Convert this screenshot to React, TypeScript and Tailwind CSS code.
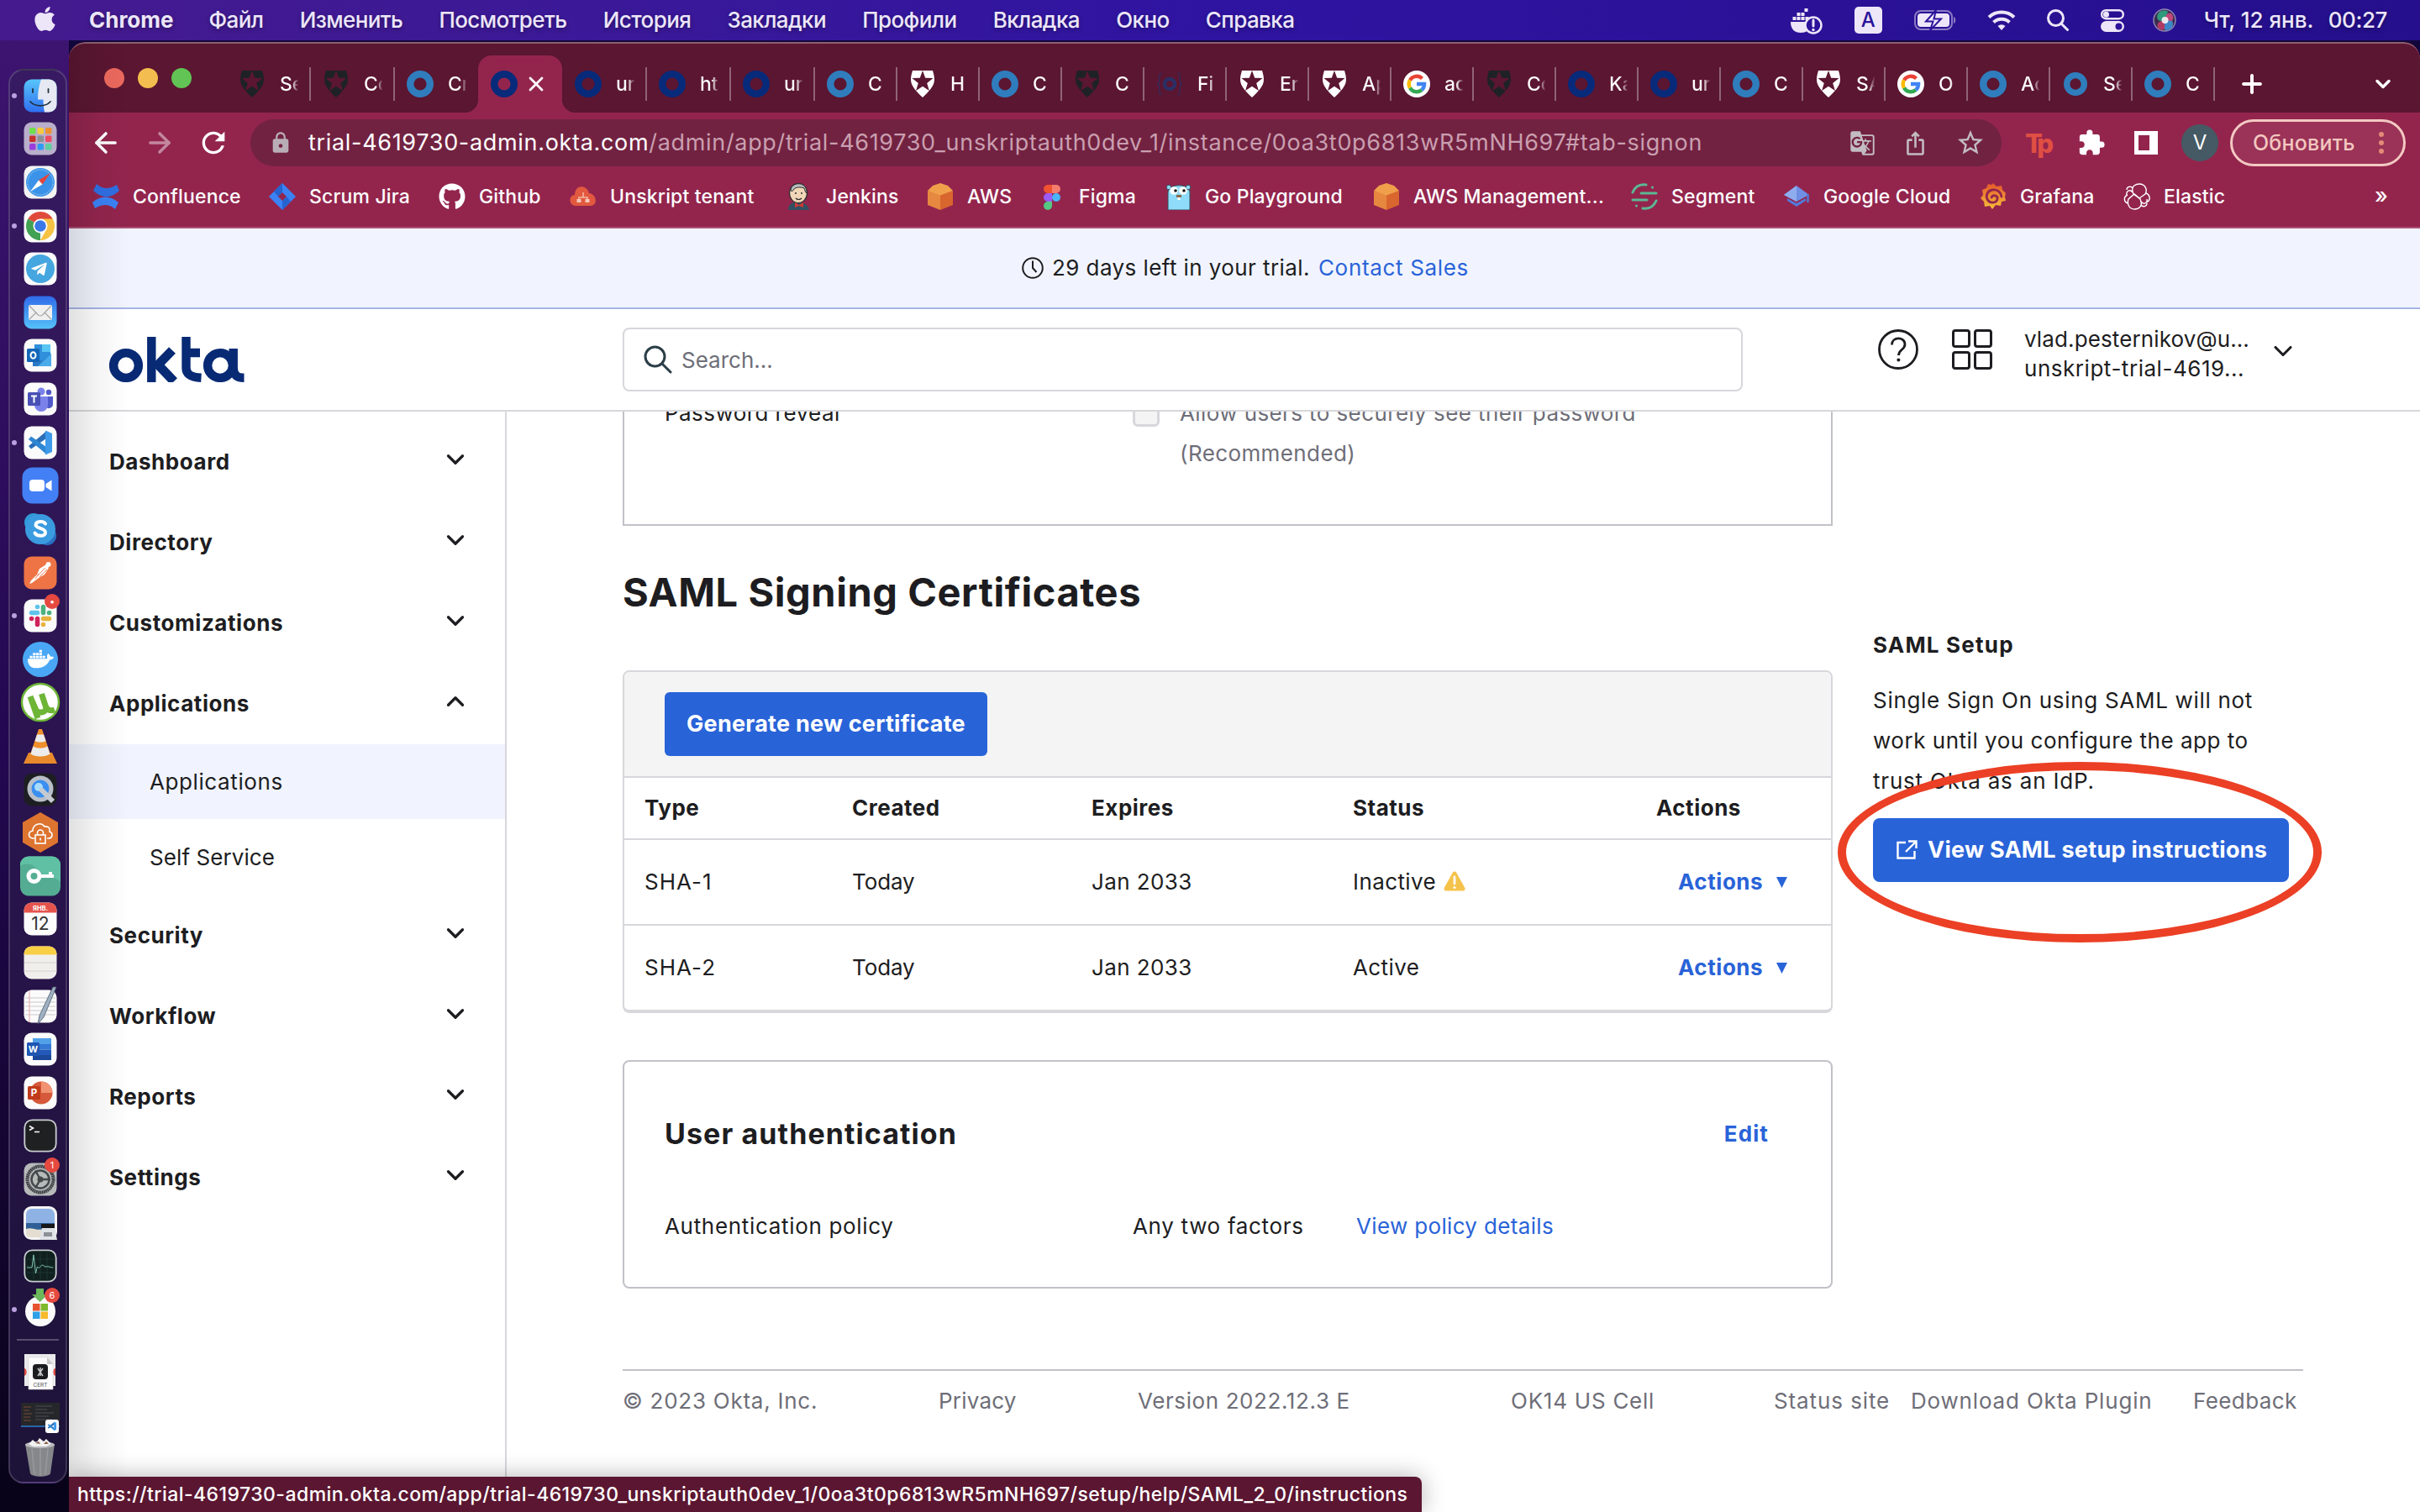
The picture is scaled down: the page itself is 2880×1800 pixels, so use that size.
import type { ReactNode } from "react";
import { ChevronDown, ChevronUp, ArrowLeft, ArrowRight, Plus, X } from "lucide-react";
import { FaApple, FaDocker, FaGithub, FaTelegramPlane } from "react-icons/fa";
import { MdExtension, MdGTranslate, MdIosShare, MdLock, MdRefresh, MdStarBorder } from "react-icons/md";

/* ---------- Shared marks ---------- */

function OktaRing({ className }: { className: string }) {
  return (
    <svg viewBox="0 0 32 32" className={className}>
      <circle cx="16" cy="16" r="11.8" fill="none" stroke="currentColor" strokeWidth="8.4" />
    </svg>
  );
}

function Shield({ className }: { className: string }) {
  return (
    <svg viewBox="0 0 32 32" className={className}>
      <path d="M4 0h24c1.500 5 2.400 8.500 1.800 13-.8 6-6.500 12-13.800 19C8.700 25 3 19 2.200 13 1.600 8.500 2.500 5 4 0z" fill="currentColor" />
      <path d="M16 0l3.200 8.800 9.300.2-7.300 5.900 2.700 9L16 18.700 8.100 23.900l2.700-9L3.500 9l9.300-.2z" fill="#5b1631" />
    </svg>
  );
}

function GoogleG() {
  return (
    <svg viewBox="0 0 32 32" className="size-8">
      <circle cx="16" cy="16" r="16" fill="#fff" />
      <g fill="none" strokeWidth="4.400">
        <path d="M22.500 9.500A9.200 9.200 0 0 0 8 11.400" stroke="#ea4335" />
        <path d="M8 11.400a9.200 9.200 0 0 0 0 9.200" stroke="#fbbc05" />
        <path d="M8 20.600a9.200 9.200 0 0 0 14 2.400" stroke="#34a853" />
        <path d="M22 23a9.200 9.200 0 0 0 3.100-7H16" stroke="#4285f4" />
      </g>
    </svg>
  );
}

function BraceRing() {
  return (
    <svg viewBox="0 0 32 32" className="size-8 text-[#2b2f66]">
      <circle cx="16" cy="16" r="6" fill="none" stroke="currentColor" strokeWidth="4.500" />
      <path d="M7 3c-4 0-3 3-3 7 0 3-1 5-2 6 1 1 2 3 2 6 0 4-1 7 3 7M25 3c4 0 3 3 3 7 0 3 1 5 2 6-1 1-2 3-2 6 0 4 1 7-3 7" fill="none" stroke="currentColor" strokeWidth="1.200" />
    </svg>
  );
}

/* ---------- macOS menu bar ---------- */

const menus = ["Файл", "Изменить", "Посмотреть", "История", "Закладки", "Профили", "Вкладка", "Окно", "Справка"];

function MenuBar() {
  return (
    <header className="flex h-12 items-center justify-between bg-linear-to-r from-[#451a8e] via-[#2f14a2] to-[#250f8c] pr-[39px] pl-[37px] text-[26px] leading-none font-medium text-[#ece6f8] [text-shadow:0_2px_5px_rgba(0,0,0,0.35)]">
      <div className="flex items-center">
        <FaApple className="mb-1 size-[33px]" />
        <span className="ml-9 font-bold">Chrome</span>
        <nav className="ml-[42px] flex gap-[43.3px] tracking-[-0.600px]">
          {menus.map((m) => (
            <span key={m}>{m}</span>
          ))}
        </nav>
      </div>
      <div className="flex items-center">
        <svg viewBox="0 0 38 32" className="mt-1 h-8 w-[38px]" fill="currentColor">
          <path d="M0 16h20v10.500c-2 1.800-5 2.500-8 2.500C5 29 0 25 0 16zM2.500 10h4v4h-4zM7.500 10h4v4h-4zM12.500 10h4v4h-4zM7.500 5h4v4h-4zM12.500 5h4v4h-4zM17.500 10h4v4h-4zM16.500 0h4v4h-4z" />
          <circle cx="27" cy="20" r="9.500" fill="#2a129a" stroke="currentColor" strokeWidth="2.500" />
          <path d="M27 14v7" stroke="currentColor" strokeWidth="3" strokeLinecap="round" />
          <circle cx="27" cy="25.500" r="1.700" />
        </svg>
        <span className="ml-[38px] flex h-8 w-[33px] items-center justify-center rounded-[5px] bg-[#ece6f8] text-[24px] text-[#2a129a] [text-shadow:none]">A</span>
        <svg viewBox="0 0 50 24" className="ml-[38px] h-6 w-[50px]">
          <rect x="1" y="1" width="44" height="22" rx="7" fill="none" stroke="#ece6f8" strokeOpacity="0.5" strokeWidth="2" />
          <rect x="4" y="4" width="38" height="16" rx="4" fill="#ece6f8" />
          <path d="M47 8c3 1 3 7 0 8z" fill="#ece6f8" fillOpacity="0.5" />
          <path d="M26 0L14 13.500h8.500L19 24l13-13.500h-8.500z" fill="#ece6f8" stroke="#2a129c" strokeWidth="2" />
        </svg>
        <svg viewBox="0 0 34 26" className="ml-[37px] h-[26px] w-[34px]" fill="none" stroke="currentColor" strokeWidth="4">
          <path d="M2 9.500a22 22 0 0 1 30 0M7.500 15.500a14 14 0 0 1 19 0" />
          <path d="M12.500 20a7 7 0 0 1 9 0L17 25z" fill="currentColor" stroke="none" />
        </svg>
        <svg viewBox="0 0 26 26" className="ml-[37px] size-[26px]" fill="none" stroke="currentColor" strokeWidth="3" strokeLinecap="round">
          <circle cx="10.500" cy="10.500" r="9" />
          <path d="M17.500 17.500l7 7" />
        </svg>
        <svg viewBox="0 0 28 27" className="ml-[38px] h-[27px] w-7">
          <rect x="1.200" y="1.200" width="25.600" height="10" rx="5" fill="none" stroke="#ece6f8" strokeWidth="2.400" />
          <circle cx="6.500" cy="6.200" r="3.500" fill="#ece6f8" />
          <rect y="14" width="28" height="13" rx="6.500" fill="#ece6f8" />
          <circle cx="21.500" cy="20.500" r="4" fill="#2a129a" />
        </svg>
        <svg viewBox="0 0 28 28" className="ml-[34px] size-7">
          <circle cx="14" cy="14" r="13" fill="#3a2c50" stroke="#8f86b0" strokeWidth="1.500" />
          <path d="M14 14C6 18 2 10 8 4c4-2 9-2 10 0z" fill="#2f9a7c" />
          <path d="M14 14c8-4 12 2 9 9-3 3-8 4-9 2z" fill="#3f86c8" />
          <path d="M14 14c-7 1-10 4-8 9 3 4 8 3 8 1z" fill="#b03a64" />
          <path d="M14 14c1-7 4-10 8-8 3 3 3 8 0 9z" fill="#c0477a" />
          <circle cx="14.500" cy="14" r="4" fill="#fff" fillOpacity="0.85" />
        </svg>
        <span className="ml-[33px] w-[148px] whitespace-nowrap">Чт, 12 янв.</span>
        <span className="tracking-[-0.400px]">00:27</span>
      </div>
    </header>
  );
}

/* ---------- Dock ---------- */

function Art({ children }: { children: ReactNode }) {
  return (
    <svg viewBox="0 0 40 40" className="size-10 overflow-visible">
      {children}
    </svg>
  );
}

function Tile({ fill = "#fbfbfb" }: { fill?: string }) {
  return <rect x="0.500" y="0.500" width="39" height="39" rx="9" fill={fill} />;
}

type DockApp = { name: string; art: ReactNode; running?: boolean; badge?: string };

const vscode = (
  <>
    <path d="M27 6l-3 3L6 24l3 3.500L27 15z" fill="#2a6fb8" />
    <path d="M27 34l-3-3L6 16l3-3.500L27 25z" fill="#2f86d2" />
    <path d="M26 5.500l8 3.500v22l-8 3.500z" fill="#3f9bea" />
  </>
);

const dockApps: DockApp[] = [
  {
    name: "Finder",
    running: true,
    art: (
      <Art>
        <defs>
          <linearGradient id="finder" x2="0" y2="1">
            <stop stopColor="#58c5fb" />
            <stop offset="1" stopColor="#2f6ff0" />
          </linearGradient>
        </defs>
        <Tile fill="url(#finder)" />
        <path d="M21 .5h9.500a9 9 0 0 1 9 9v21a9 9 0 0 1-9 9H25c-1-5-1.500-9-1.500-15H17C17 15 18.500 7 21 .5z" fill="#e6e9f1" />
        <path d="M11 12v4M29.500 12v4M8 27c6 6.500 18 6.500 24 0" fill="none" stroke="#20303f" strokeWidth="1.800" strokeLinecap="round" />
      </Art>
    ),
  },
  {
    name: "Launchpad",
    art: (
      <Art>
        <Tile fill="#b9aecb" />
        {["#6fe04d", "#f7c93f", "#ee9133", "#c8322c", "#8e8e93", "#ee4b62", "#9a3fdc", "#2f9cf4", "#5fcfa0"].map((c, i) => (
          <rect key={c} x={7 + (i % 3) * 9.5} y={7 + Math.floor(i / 3) * 9.5} width="7.500" height="7.500" rx="1.500" fill={c} />
        ))}
      </Art>
    ),
  },
  {
    name: "Safari",
    art: (
      <Art>
        <Tile fill="#f3f3f3" />
        <circle cx="20" cy="20" r="17" fill="#3a93e8" />
        <circle cx="20" cy="20" r="15" fill="none" stroke="#bcdcf8" strokeWidth="1.500" strokeDasharray="0.600 1.400" />
        <path d="M32 9L18 17.500l4.500 5z" fill="#e8433a" />
        <path d="M8 31l10-13.500 4.500 5z" fill="#fff" />
      </Art>
    ),
  },
  {
    name: "Chrome",
    running: true,
    art: (
      <Art>
        <Tile />
        <path d="M20 20L5.300 11.500A17 17 0 0 1 34.700 11.500z" fill="#e04a3c" />
        <path d="M20 20V37A17 17 0 0 1 5.300 11.500z" fill="#43a154" />
        <path d="M20 11.500h14.700A17 17 0 0 1 20 37l7.500-13z" fill="#f6c244" />
        <circle cx="20" cy="20" r="8.500" fill="#fff" />
        <circle cx="20" cy="20" r="6.800" fill="#3b78e7" />
      </Art>
    ),
  },
  {
    name: "Telegram",
    art: (
      <Art>
        <Tile />
        <circle cx="20" cy="20" r="17" fill="#46a6e0" />
        <FaTelegramPlane x="8" y="10" size={21} color="#fff" />
      </Art>
    ),
  },
  {
    name: "Mail",
    art: (
      <Art>
        <defs>
          <linearGradient id="mail" x2="0" y2="1">
            <stop stopColor="#2f6bea" />
            <stop offset="1" stopColor="#56c1fa" />
          </linearGradient>
        </defs>
        <Tile fill="url(#mail)" />
        <rect x="6" y="11" width="28" height="18" rx="2" fill="#f0f0f0" />
        <path d="M7 12l10.500 11q2.500 2 5 0L33 12M7 28l8-8M33 28l-8-8" fill="none" stroke="#a5a5a5" strokeWidth="1.200" />
      </Art>
    ),
  },
  {
    name: "Outlook",
    art: (
      <Art>
        <Tile />
        <path d="M13 7h19v26H13z" fill="#2f8fdc" />
        <path d="M22 7h10v9H22z" fill="#59c5f2" />
        <path d="M11 19l11 8 11-9v15H11z" fill="#2a78c6" />
        <path d="M33 18v15H17z" fill="#4aabeb" />
        <rect x="4" y="12" width="15" height="16" rx="1.500" fill="#1567b8" />
        <ellipse cx="11.500" cy="20" rx="3" ry="3.700" fill="none" stroke="#fff" strokeWidth="2" />
      </Art>
    ),
  },
  {
    name: "Teams",
    art: (
      <Art>
        <Tile />
        <circle cx="21" cy="11" r="4.500" fill="#7b83eb" />
        <circle cx="30" cy="12" r="3.200" fill="#5059c9" />
        <path d="M24 17h11v9a5 5 0 0 1-9 3z" fill="#5059c9" />
        <path d="M13 17h16v10a8 8 0 0 1-16 0z" fill="#7b83eb" />
        <rect x="5" y="12" width="15" height="16" rx="1.500" fill="#4850b5" />
        <path d="M9 16.500h7M12.500 16.500v8" stroke="#fff" strokeWidth="2" />
      </Art>
    ),
  },
  { name: "VS Code", running: true, art: <Art><Tile />{vscode}</Art> },
  {
    name: "Zoom",
    art: (
      <Art>
        <rect x="-1.500" y="-1.500" width="43" height="43" rx="12" fill="#4380f5" />
        <rect x="7" y="13" width="18" height="14" rx="4" fill="#fff" />
        <path d="M26.500 18l7-4.500v13l-7-4.500z" fill="#fff" />
      </Art>
    ),
  },
  {
    name: "Skype",
    art: (
      <Art>
        <circle cx="12" cy="12" r="11" fill="#2f9ad8" />
        <circle cx="28" cy="28" r="11" fill="#2a70c4" />
        <circle cx="20" cy="20" r="18" fill="#3b9be0" />
        <path d="M26 13.500c-2-3.500-11-3.500-11.500 1.200-.4 5 11.500 3.500 11.500 9.300 0 5-10 5-12.500.5" fill="none" stroke="#fff" strokeWidth="4" strokeLinecap="round" />
      </Art>
    ),
  },
  {
    name: "Postman",
    art: (
      <Art>
        <Tile fill="#ee7445" />
        <path d="M7 33l2-4 7-7 3-7 8-5 3 4-5 8-7 4-8 6z" fill="#fff" />
        <circle cx="29.500" cy="10" r="3" fill="#fff" />
        <path d="M16 24l10-10M19 25l9-9M18 21l-4 6" stroke="#ee7445" strokeWidth="0.900" />
      </Art>
    ),
  },
  {
    name: "Slack",
    running: true,
    badge: "•",
    art: (
      <Art>
        <Tile />
        <g strokeWidth="5.500" strokeLinecap="round">
          <path d="M9.500 16.500h7" stroke="#5fc4ec" />
          <path d="M16.500 9.500v.1" stroke="#5fc4ec" />
          <path d="M23.500 9.500v7" stroke="#4cb280" />
          <path d="M30.500 16.500h.1" stroke="#4cb280" />
          <path d="M23.500 23.500h7" stroke="#e8b23c" />
          <path d="M23.500 30.500v.1" stroke="#e8b23c" />
          <path d="M16.500 23.500v7" stroke="#d0245a" />
          <path d="M9.500 23.500h.1" stroke="#d0245a" />
        </g>
      </Art>
    ),
  },
  {
    name: "Docker",
    art: (
      <Art>
        <circle cx="20" cy="20" r="21" fill="#4aa7f5" />
        <FaDocker x="5" y="4" size={31} color="#fff" />
      </Art>
    ),
  },
  {
    name: "uTorrent",
    art: (
      <Art>
        <circle cx="20" cy="20" r="22" fill="#fff" stroke="#6db536" strokeWidth="2.500" />
        <path d="M8 13l9 26M8.500 14.500l6 14c3 6 14 4 12-3L21.500 10M26 24c2 5 5 7 11 5" fill="none" stroke="#6db536" strokeWidth="7" />
      </Art>
    ),
  },
  {
    name: "VLC",
    art: (
      <Art>
        <path d="M6 28h28l6 13H0z" fill="#e88a2c" />
        <path d="M18 0h4l10 30c-5 4-19 4-24 0z" fill="#ef8f2d" />
        <path d="M16 6.500h8l2.500 7.500c-4 2-9 2-13 0zM11.500 20.500c5 3 12 3 17 0l3 9c-5 4-18 4-23 0z" fill="#ececec" />
      </Art>
    ),
  },
  {
    name: "QuickTime",
    art: (
      <Art>
        <Tile fill="#1c1e22" />
        <circle cx="20" cy="19" r="13" fill="#3a8ff0" stroke="#b9bfc8" strokeWidth="5" />
        <circle cx="18" cy="17" r="5" fill="#a9dcff" />
        <path d="M20 19l15 15" stroke="#c5cad1" strokeWidth="6" />
      </Art>
    ),
  },
  {
    name: "AWS VPN",
    art: (
      <Art>
        <path d="M20-4l21 12v24L20 44-1 32V8z" fill="#dd7430" />
        <path d="M13 27H11c-6-1-6-8 0-9 0-8 10-11 14-5 5-1 7 3 6 6 5 2 3 8-1 8h-2" fill="none" stroke="#fff" strokeWidth="1.600" />
        <rect x="14" y="23" width="12" height="10" fill="none" stroke="#fff" strokeWidth="1.600" />
        <path d="M16.500 23v-2.500a3.500 3.500 0 0 1 7 0V23M20 26.500v3" fill="none" stroke="#fff" strokeWidth="1.600" />
      </Art>
    ),
  },
  {
    name: "Keys",
    art: (
      <Art>
        <rect x="-4" y="-3.500" width="48" height="47" rx="10" fill="#54ad93" />
        <path d="M-4 8C6 2 14 8 18 14s16 4 26 13V6.500a10 10 0 0 0-10-10H6a10 10 0 0 0-10 10z" fill="#5fc0a4" />
        <circle cx="12.500" cy="20" r="6.500" fill="none" stroke="#fff" strokeWidth="5" />
        <path d="M19 20h17M32 20v-5" stroke="#fff" strokeWidth="4" />
      </Art>
    ),
  },
  {
    name: "Calendar",
    art: (
      <Art>
        <Tile />
        <path d="M.5 12.500v-3a9 9 0 0 1 9-9h21a9 9 0 0 1 9 9v3z" fill="#e5544c" />
        <text x="20" y="9.800" textAnchor="middle" fontSize="7.500" fontWeight="700" fill="#fff">ЯНВ.</text>
        <text x="20" y="33" textAnchor="middle" fontSize="21" fill="#333">12</text>
      </Art>
    ),
  },
  {
    name: "Notes",
    art: (
      <Art>
        <Tile fill="#f1efec" />
        <path d="M.5 10.500v-1a9 9 0 0 1 9-9h21a9 9 0 0 1 9 9v1z" fill="#f8cf45" />
        <path d="M1 20h38M1 30h38" stroke="#d4d2ce" />
      </Art>
    ),
  },
  {
    name: "TextEdit",
    art: (
      <Art>
        <Tile />
        <path d="M2 10h36M2 15h36M2 20h36M2 25h36M2 30h36" stroke="#c9c9cd" />
        <path d="M7 1v38" stroke="#e9a3a3" />
        <path d="M39-3l-4 0L19 31l-2 10 7-8z" fill="#9fb0c2" stroke="#4d5c6c" strokeWidth="0.800" />
      </Art>
    ),
  },
  {
    name: "Word",
    art: (
      <Art>
        <Tile />
        <path d="M11 7h22v7H11z" fill="#52a0e8" />
        <path d="M11 14h22v6.500H11z" fill="#3479d4" />
        <path d="M11 20.500h22V27H11z" fill="#2359b8" />
        <path d="M11 27h22v6H11z" fill="#1c489a" />
        <rect x="4" y="12" width="15" height="16" rx="1.500" fill="#1e56b2" />
        <text x="11.500" y="24.200" textAnchor="middle" fontSize="11" fontWeight="700" fill="#fff">W</text>
      </Art>
    ),
  },
  {
    name: "PowerPoint",
    art: (
      <Art>
        <Tile />
        <circle cx="21" cy="20" r="13.500" fill="#d5593a" />
        <path d="M21 20V6.500A13.500 13.500 0 0 1 34.500 20z" fill="#f19373" />
        <rect x="5" y="12" width="15" height="16" rx="1.500" fill="#c13b1b" />
        <text x="12.500" y="24.200" textAnchor="middle" fontSize="11.500" fontWeight="700" fill="#fff">P</text>
      </Art>
    ),
  },
  {
    name: "Terminal",
    art: (
      <Art>
        <rect x="1.300" y="1.300" width="37.400" height="37.400" rx="9" fill="#1f2022" stroke="#c9ced1" strokeWidth="1.800" />
        <path d="M7 8.500l4.500 2.500L7 13.500M13 15.500h6" fill="none" stroke="#fff" strokeWidth="1.500" />
      </Art>
    ),
  },
  {
    name: "Settings",
    badge: "1",
    art: (
      <Art>
        <Tile fill="#b6bab9" />
        <circle cx="20" cy="20" r="15.500" fill="none" stroke="#3c3f42" strokeWidth="4" strokeDasharray="1.800 0.500" />
        <circle cx="20" cy="20" r="10.500" fill="none" stroke="#45484b" strokeWidth="2.500" />
        <path d="M20 20h12M20 20l-6-10.500M20 20l-6 10.500" stroke="#45484b" strokeWidth="2.500" />
        <circle cx="20" cy="20" r="3.500" fill="#45484b" />
      </Art>
    ),
  },
  {
    name: "Preview",
    art: (
      <Art>
        <rect x="1.500" y="1.500" width="37" height="37" rx="8" fill="#8fb2e4" stroke="#f4f4f4" strokeWidth="3" />
        <path d="M3 20h34v9H3z" fill="#2f5f96" />
        <path d="M3 27c6-3 14 3 20 0v10H8c-3 0-5-2-5-5z" fill="#e4ded2" />
        <path d="M21 21h16v5H21z" fill="#17181a" />
        <path d="M22 26h15l3 14H19z" fill="#dfe2e6" />
        <path d="M24 31h10v5H24z" fill="#8c9097" />
      </Art>
    ),
  },
  {
    name: "Activity Monitor",
    art: (
      <Art>
        <rect x="1.300" y="1.300" width="37.400" height="37.400" rx="9" fill="#10201f" stroke="#c9ced1" strokeWidth="1.800" />
        <path d="M4 12h32M4 20h32M4 28h32M12 4v32M20 4v32M28 4v32" stroke="#234540" strokeWidth="0.600" />
        <path d="M4 22h6l2-15 2.500 22 1.800-8c3 4 4-2 6-2s3 3 5 2 3 1 8 1" fill="none" stroke="#7fc3b2" strokeWidth="1" />
      </Art>
    ),
  },
  {
    name: "Microsoft AutoUpdate",
    running: true,
    badge: "6",
    art: (
      <Art>
        <circle cx="20" cy="22" r="18" fill="#fafafa" />
        <path d="M15-5h9v7h5l-9.500 9L10 2h5z" fill="#6cb85c" />
        <path d="M11 13h8.500v8.500H11z" fill="#e5532f" />
        <path d="M20.500 13H29v8.500h-8.500z" fill="#7fba2c" />
        <path d="M11 22.500h8.500V31H11z" fill="#2fa0e8" />
        <path d="M20.500 22.500H29V31h-8.500z" fill="#f8b92c" />
      </Art>
    ),
  },
];

const dockFiles: DockApp[] = [
  {
    name: "Certificate",
    art: (
      <Art>
        <path d="M1 0h37v38H1z" fill="#e9e9ea" />
        <path d="M1 17c3 0 4 8 0 9zM38 17c-3 0-4 8 0 9z" fill="#dc4b41" />
        <path d="M6 4h22l7 8v30H6z" fill="#fbfbfb" stroke="#dcdcde" strokeWidth="0.600" />
        <path d="M28 4l7 8h-7z" fill="#c9c9cb" />
        <rect x="11" y="12" width="18" height="18" rx="4" fill="#1b1c1e" />
        <path d="M17 17l6 9M23 17l-6 9M20 16v10" stroke="#c8c8ca" strokeWidth="1.500" />
        <text x="20" y="38.500" textAnchor="middle" fontSize="6.500" fill="#555">CERT</text>
      </Art>
    ),
  },
  {
    name: "Editor window",
    art: (
      <Art>
        <rect x="-3" y="6" width="46" height="28" fill="#26272b" />
        <path d="M0 11h9M0 15h7M0 19h10M0 23h8M0 27h9" stroke="#7a4a34" />
        <path d="M14 10h20M14 14h14M14 18h22M14 22h16M14 26h20" stroke="#4c4e55" />
        <path d="M-3 34h46" stroke="#2f7ed0" strokeWidth="1.500" />
        <rect x="26" y="26" width="16" height="16" rx="3" fill="#fff" />
        <g transform="translate(26.500 26.500) scale(0.370)">{vscode}</g>
      </Art>
    ),
  },
  {
    name: "Trash",
    art: (
      <Art>
        <path d="M2 3h35l-5 35c-2 5-22 5-24 0z" fill="#85878b" />
        <path d="M10 8l3 31M20 8v33M29 8l-3 31" stroke="#989a9f" strokeWidth="1.500" />
        <ellipse cx="19.500" cy="4" rx="17.500" ry="4" fill="#b9babd" />
        <path d="M6 3l5-5 4 4 4-6 5 4 3-3 6 6-6 3H11z" fill="#f1f1f1" />
        <path d="M14 2l4-2 2 3zM24 3l3-3 3 3z" fill="#8a5b45" />
      </Art>
    ),
  },
];

function DockSlot({ app }: { app: DockApp }) {
  return (
    <li className="relative flex h-[51.620px] shrink-0 items-center gap-2 pl-0.5">
      <span className={app.running ? "size-1.5 rounded-full bg-[#b9a0e0]" : "size-1.5"} />
      {app.art}
      {app.badge && (
        <span className="absolute top-0 left-[41px] flex size-[18px] items-center justify-center rounded-full bg-[#e5493f] text-[11px] leading-none text-white">
          {app.badge}
        </span>
      )}
    </li>
  );
}

function Dock() {
  return (
    <aside className="w-[82px] shrink-0 bg-linear-to-b from-[#3d1470] via-[#22084f] via-50% to-[#080318] pt-[34px] pl-2.5">
      <ul className="flex h-[1684px] w-[70px] flex-col rounded-[18px] border-2 border-white/15 bg-linear-to-b from-[#371a62] via-[#2a144f] to-[#1d1338] pt-1">
        {dockApps.map((a) => (
          <DockSlot key={a.name} app={a} />
        ))}
        <li className="mt-[9px] mb-[11px] ml-2 h-0.5 w-[50px] shrink-0 bg-white/25" />
        {dockFiles.map((a) => (
          <DockSlot key={a.name} app={a} />
        ))}
      </ul>
    </aside>
  );
}

/* ---------- Browser chrome ---------- */

const light = <OktaRing className="size-8 text-[#2f7dbd]" />;
const navy = <OktaRing className="size-8 text-[#082a7a]" />;
const dark = <Shield className="size-8 text-[#1e2227]" />;
const white = <Shield className="size-8 text-white" />;

const leadingTabs = [
  { icon: dark, title: "Se" },
  { icon: dark, title: "Co" },
  { icon: light, title: "Cr", noLine: true },
];
const middleTabs = [
  { icon: navy, title: "ur" },
  { icon: navy, title: "ht" },
  { icon: navy, title: "ur" },
];
const trailingTabs = [
  { icon: light, title: "C" },
  { icon: white, title: "H" },
  { icon: light, title: "C" },
  { icon: dark, title: "C" },
  { icon: <BraceRing />, title: "Fi" },
  { icon: white, title: "Er" },
  { icon: white, title: "Ap" },
  { icon: <GoogleG />, title: "ac" },
  { icon: dark, title: "Co" },
  { icon: navy, title: "Ka" },
  { icon: navy, title: "ur" },
  { icon: light, title: "C" },
  { icon: white, title: "SA" },
  { icon: <GoogleG />, title: "O" },
  { icon: light, title: "Ac" },
  { icon: <OktaRing className="mx-0.5 size-7 text-[#2f7dbd]" />, title: "Se" },
  { icon: light, title: "C" },
];

function Tab({ icon, title, noLine, wide }: { icon: ReactNode; title: string; noLine?: boolean; wide?: boolean }) {
  return (
    <div className={wide ? "flex w-[100px] items-center pl-[15px]" : "flex w-[98px] items-center pl-[15px]"}>
      {icon}
      <span className="ml-[17px] w-[28px] bg-linear-to-r from-white from-50% to-transparent to-80% bg-clip-text text-[23px] font-medium whitespace-nowrap text-transparent">
        {title}
      </span>
      {!noLine && <span className="-mr-px ml-auto h-10 w-0.5 shrink-0 bg-[#8f6475]" />}
    </div>
  );
}

function TabStrip() {
  return (
    <div className="flex h-[84px] items-end rounded-t-[20px] border-t-2 border-[#8e6073] bg-[#5b1631]">
      <div className="mb-[29px] ml-[42px] flex w-[145px] gap-4">
        <span className="size-6 rounded-full bg-[#ec695e]" />
        <span className="size-6 rounded-full bg-[#f4bd4f]" />
        <span className="size-6 rounded-full bg-[#61c454]" />
      </div>
      <div className="flex h-[68px]">
        {leadingTabs.map((t, i) => (
          <Tab key={i} wide {...t} />
        ))}
        <div className="relative flex w-[100px] items-center rounded-t-2xl bg-[#93254d] pl-[15px]">
          <span className="absolute bottom-0 -left-4 size-4 bg-[radial-gradient(circle_at_0_0,transparent_16px,#93254d_16.500px)]" />
          <span className="absolute -right-4 bottom-0 size-4 bg-[radial-gradient(circle_at_100%_0,transparent_16px,#93254d_16.500px)]" />
          {navy}
          <X className="ml-2 size-7 text-white" strokeWidth={2.4} />
        </div>
        {middleTabs.map((t, i) => (
          <Tab key={i} wide {...t} />
        ))}
        {trailingTabs.map((t, i) => (
          <Tab key={i} {...t} />
        ))}
        <div className="flex items-center pl-7 text-white">
          <Plus className="size-[34px]" strokeWidth={2.8} />
          <ChevronDown className="ml-[125px] size-7" strokeWidth={3} />
        </div>
      </div>
    </div>
  );
}

function Toolbar() {
  return (
    <div className="flex h-[72px] items-center text-white">
      <div className="flex w-[216px] items-center pl-[25px]">
        <ArrowLeft className="size-[38px]" strokeWidth={2.2} />
        <ArrowRight className="ml-[26px] size-[38px] opacity-45" strokeWidth={2.2} />
        <MdRefresh className="ml-[25px] size-[40px]" />
      </div>
      <div className="flex h-14 w-[2084px] items-center rounded-full bg-[#722241] pl-[22px]">
        <MdLock className="size-7 text-[#b9aeb6]" />
        <span className="ml-[19px] w-[1778px] pt-px text-[27px] tracking-[0.680px] whitespace-nowrap text-[#c99fb0]">
          <span className="text-white">trial-4619730-admin.okta.com</span>
          /admin/app/trial-4619730_unskriptauth0dev_1/instance/0oa3t0p6813wR5mNH697#tab-signon
        </span>
        <div className="ml-[56px] flex items-center gap-[32px] text-[#c2bcc0]">
          <MdGTranslate className="size-[31px]" />
          <MdIosShare className="size-[31px]" />
          <MdStarBorder className="size-[36px]" />
        </div>
      </div>
      <span className="ml-7 w-[33px] text-[31px] leading-none font-extrabold tracking-[-5px] text-[#e04f43]">Tp</span>
      <MdExtension className="ml-[29px] size-[34px]" />
      <span className="ml-[34px] h-7 w-7 border-[5px] border-r-[10px] border-white" />
      <span className="ml-7 flex size-11 items-center justify-center rounded-full bg-[#455a64] text-[24px]">V</span>
      <div className="ml-3.5 flex h-14 w-[209px] items-center rounded-full border-[3px] border-[#f3c9c3] bg-[#9a3357] pl-6 text-[25px] font-medium text-[#f3c6c0]">
        <span className="w-[150px] pt-0.5 tracking-[0.200px]">Обновить</span>
        <span className="flex flex-col gap-1">
          <span className="size-1.5 rounded-full bg-[#e58a78]" />
          <span className="size-1.5 rounded-full bg-[#e58a78]" />
          <span className="size-1.5 rounded-full bg-[#e58a78]" />
        </span>
      </div>
    </div>
  );
}

const awsCube = (
  <svg viewBox="0 0 32 32" className="size-8">
    <path d="M1 9l15 4v19L1 26z" fill="#e6883f" />
    <path d="M31 9l-15 4v19l15-6z" fill="#d9662f" />
    <path d="M16 0l9 3 6 6-15 5.500L1 9l6-6z" fill="#f0a04b" />
  </svg>
);

const bookmarks: { label: string; box: string; icon: ReactNode }[] = [
  {
    label: "Confluence",
    box: "w-[210px]",
    icon: (
      <svg viewBox="0 0 32 32" className="size-8">
        <path d="M5 1c7 6 14 7 24 1l3 7C23 18 12 19 1 9z" fill="#2f6fe4" />
        <path d="M27 31c-7-6-14-7-24-1l-3-7c9-8 20-9 31 0z" fill="#3b82f6" />
      </svg>
    ),
  },
  {
    label: "Scrum Jira",
    box: "w-[202px]",
    icon: (
      <svg viewBox="0 0 32 32" className="size-8">
        <path d="M16 0l16 16-16 16L0 16z" fill="#3b82f6" />
        <path d="M16 0v11l-5 5-5-6z" fill="#2563d0" />
        <path d="M16 32V21l5-5 5 6z" fill="#2563d0" />
        <path d="M16 11l5 5-5 5-5-5z" fill="#93254d" />
      </svg>
    ),
  },
  { label: "Github", box: "w-[156px]", icon: <FaGithub className="size-8 text-white" /> },
  {
    label: "Unskript tenant",
    box: "w-[257px]",
    icon: (
      <svg viewBox="0 0 32 32" className="size-8">
        <path d="M7 27C-2 26-1 14 6 14 6 2 20 1 23 12c9 1 11 14 2 15z" fill="#e2593f" />
        <path d="M16 11v6M11 20v-3h10v3" fill="none" stroke="#f6b8a6" strokeWidth="1.500" />
        <path d="M8.500 19h5v4h-5zM18.500 19h5v4h-5z" fill="#f6c8ba" />
      </svg>
    ),
  },
  {
    label: "Jenkins",
    box: "w-[168px]",
    icon: (
      <svg viewBox="0 0 32 32" className="size-8">
        <path d="M3 32c0-6 4-9 11-10 8 1 13 4 14 10z" fill="#335061" />
        <ellipse cx="15" cy="12" rx="10.500" ry="11.500" fill="#f0d6b7" stroke="#2b2b2b" strokeWidth="1.200" />
        <path d="M6 9c0-11 20-12 19 3-2-1-2-4-3-6-5-2-10-1-12 1-1 2-2 3-4 2z" fill="#b9bcbe" stroke="#2b2b2b" />
        <path d="M11 12h2M18 12h2M12 18c2 2 5 2 7 0" stroke="#2b2b2b" strokeWidth="1.500" fill="none" />
        <path d="M11 23l5 3 5-3v6l-5-2-5 2z" fill="#d33833" />
      </svg>
    ),
  },
  { label: "AWS", box: "w-[133px]", icon: awsCube },
  {
    label: "Figma",
    box: "w-[150px]",
    icon: (
      <svg viewBox="0 0 32 32" className="size-8">
        <path d="M16 2h-5a5 5 0 0 0 0 10h5z" fill="#f0532f" />
        <path d="M16 2h5a5 5 0 0 1 0 10h-5z" fill="#f47c6c" />
        <path d="M16 12h-5a5 5 0 0 0 0 10h5z" fill="#9b5cf6" />
        <circle cx="21" cy="17" r="5" fill="#4bb4f8" />
        <path d="M16 22h-5a5 5 0 1 0 5 5z" fill="#55c883" />
      </svg>
    ),
  },
  {
    label: "Go Playground",
    box: "w-[248px]",
    icon: (
      <svg viewBox="0 0 32 32" className="size-8">
        <path d="M4 32V11C4 0 30 0 30 11v21z" fill="#8edcf9" stroke="#31505a" strokeWidth="1" />
        <circle cx="5" cy="5" r="2.800" fill="#8edcf9" stroke="#31505a" />
        <circle cx="28" cy="5" r="2.800" fill="#8edcf9" stroke="#31505a" />
        <circle cx="11" cy="9" r="4.800" fill="#fff" />
        <circle cx="22" cy="9" r="4.800" fill="#fff" />
        <circle cx="13" cy="9" r="1.800" fill="#111" />
        <circle cx="23" cy="9" r="1.800" fill="#111" />
        <path d="M14 14h6v3h-6z" fill="#8a6a4b" />
        <path d="M15.500 17h3v3h-3z" fill="#fff" />
      </svg>
    ),
  },
  { label: "AWS Management...", box: "w-[307px]", icon: awsCube },
  {
    label: "Segment",
    box: "w-[181px]",
    icon: (
      <svg viewBox="0 0 32 32" className="size-8" fill="none" stroke="#5cb894" strokeWidth="3" strokeLinecap="round">
        <path d="M2 11C5 4 11 1 18 2M30 21c-3 7-9 10-16 9M12 12h18M2 20h17" />
        <path d="M25.500 5v.1M6.500 27v.1" />
      </svg>
    ),
  },
  {
    label: "Google Cloud",
    box: "w-[234px]",
    icon: (
      <svg viewBox="0 0 32 32" className="size-8">
        <path d="M16 3l15 11-15 8L1 14z" fill="#6f8fe4" />
        <path d="M16 3L1 14l15 8z" fill="#8facee" />
        <path d="M5 18l11 6 11-6v3l-11 7-11-7z" fill="#5578d8" />
        <path d="M29.500 13v10" stroke="#5578d8" strokeWidth="2.500" />
      </svg>
    ),
  },
  {
    label: "Grafana",
    box: "w-[171px]",
    icon: (
      <svg viewBox="0 0 32 32" className="size-8">
        <defs>
          <linearGradient id="grafana" x2="0" y2="1">
            <stop stopColor="#e5562b" />
            <stop offset="1" stopColor="#f7c13a" />
          </linearGradient>
        </defs>
        <path d="M16 0l4 4 6-1 1 5 4 4-1 4 1 5-5 1-1 5-6-1-4 5-3-4-6 1-1-6-4-4 3-4-1-6 5-2 2-5 4 1z" fill="url(#grafana)" />
        <path d="M26 16c-1-6-6-9-11-8-6 1-8 7-6 11 3 6 11 5 12 0 1-4-5-6-7-2" fill="none" stroke="#93254d" strokeWidth="2.800" strokeLinecap="round" />
      </svg>
    ),
  },
  {
    label: "Elastic",
    box: "w-[150px]",
    icon: (
      <svg viewBox="0 0 32 32" className="size-8" fill="none" stroke="#fff" strokeWidth="1.400">
        <path d="M12 13C8 4 14 1 19 1c7 0 10 7 7 12l-7 5z" />
        <path d="M20 19c4 9-2 12-7 12-6 0-9-6-7-12l7-6z" />
        <path d="M11 11c-3-4-8-2-7 3M27 12c5 2 6 9 0 11M5 14c-5 2-5 9 1 10M21 22c3 4 8 2 7-3M4 8c0-4 5-5 7-2M28 24c0 4-5 5-7 2" />
      </svg>
    ),
  },
];

function Bookmarks() {
  return (
    <div className="flex h-[66px] items-center border-b-2 border-[#ab5274] pb-2 pl-7 text-[23px] font-medium tracking-[0.170px] text-white">
      {bookmarks.map((b) => (
        <div key={b.label} className={`flex shrink-0 items-center gap-4 whitespace-nowrap ${b.box}`}>
          {b.icon}
          {b.label}
        </div>
      ))}
      <span className="ml-[149px] pb-1 text-[26px]">»</span>
    </div>
  );
}

/* ---------- Okta admin page ---------- */

function TrialBanner() {
  return (
    <div className="flex h-24 items-center justify-center border-b-2 border-[#a5b4e8] bg-[#f1f4fe] pb-px pl-0.5">
      <svg viewBox="0 0 26 26" className="size-[26px]" fill="none" stroke="#1d1d21" strokeWidth="2">
        <circle cx="13" cy="13" r="11.800" />
        <path d="M13 4.500V13l4.500 5" />
      </svg>
      <span className="ml-2.5 tracking-[0.420px]">29 days left in your trial.</span>
      <a className="ml-2.5 tracking-[0.670px] text-[#2963d8]">Contact Sales</a>
    </div>
  );
}

function OktaLogo() {
  return (
    <svg viewBox="0 0 161 54" className="h-[54px] w-[161px] text-[#082a75]" fill="none" stroke="currentColor" strokeWidth="10.400">
      <circle cx="20" cy="34" r="14.900" />
      <path d="M50.300 0v54" />
      <path d="M55 36.500L75 16M56 31l21 22" strokeWidth="11" />
      <path d="M91.500 0v37c0 7.500 5 11 18 11.800M91.500 19H108" />
      <circle cx="132" cy="34" r="14.900" />
      <path d="M147.700 14v22c0 8 3 12.800 12.800 12.800" />
    </svg>
  );
}

function PageHeader() {
  return (
    <div className="flex h-[122px] items-center border-b-2 border-[#d7d7dc] pl-12">
      <OktaLogo />
      <div className="ml-[450px] flex h-[76px] w-[1333px] items-center rounded-lg border-2 border-[#d7d7dc] pl-[23px] text-[#6e6e78]">
        <svg viewBox="0 0 34 34" className="size-[34px]" fill="none" stroke="#2c3e48" strokeWidth="3" strokeLinecap="round">
          <circle cx="13.500" cy="13.500" r="11.500" />
          <path d="M22 22l10 10" />
        </svg>
        <span className="ml-[11px]">Search...</span>
      </div>
      <svg viewBox="0 0 48 48" className="mb-6 ml-[161px] size-12" fill="none" stroke="#1d1d21" strokeWidth="2.800">
        <circle cx="24" cy="24" r="22.500" />
        <path d="M16.500 18.500c0-10 15.500-10 15.500-.5 0 6.500-7.500 6-7.500 13" />
        <circle cx="24.400" cy="36.500" r="2" fill="#1d1d21" stroke="none" />
      </svg>
      <div className="mb-6 ml-10 grid size-12 grid-cols-2 gap-1">
        <span className="rounded-[4px] border-[3px] border-[#1d1d21]" />
        <span className="rounded-[4px] border-[3px] border-[#1d1d21]" />
        <span className="rounded-[4px] border-[3px] border-[#1d1d21]" />
        <span className="rounded-[4px] border-[3px] border-[#1d1d21]" />
      </div>
      <div className="mb-[15px] ml-[38px] w-[270px] leading-[35px] whitespace-nowrap">
        <div className="tracking-[0.120px]">vlad.pesternikov@u...</div>
        <div className="tracking-[0.530px]">unskript-trial-4619...</div>
      </div>
      <ChevronDown className="mb-5 ml-5 size-9" strokeWidth={2.1} />
    </div>
  );
}

function NavItem({ label, open }: { label: string; open?: boolean }) {
  const Chevron = open ? ChevronUp : ChevronDown;
  return (
    <div className="flex h-24 items-center justify-between pr-[42px] pl-12 font-bold tracking-[0.560px]">
      {label}
      <Chevron className="mb-1 size-[34px]" strokeWidth={2.3} />
    </div>
  );
}

function SideNav() {
  return (
    <nav className="w-[521px] shrink-0 border-r-2 border-[#d7d7dc] pt-[11px]">
      <NavItem label="Dashboard" />
      <NavItem label="Directory" />
      <NavItem label="Customizations" />
      <NavItem label="Applications" open />
      <div className="mt-px flex h-[89px] items-center bg-[#f1f4fe] pl-24 tracking-[0.600px]">Applications</div>
      <div className="flex h-[90px] items-center pl-24 tracking-[0.080px]">Self Service</div>
      <NavItem label="Security" />
      <NavItem label="Workflow" />
      <NavItem label="Reports" />
      <NavItem label="Settings" />
    </nav>
  );
}

const certificates = [
  { type: "SHA-1", created: "Today", expires: "Jan 2033", status: "Inactive", warn: true },
  { type: "SHA-2", created: "Today", expires: "Jan 2033", status: "Active", warn: false },
];

const columns = "grid grid-cols-[247px_285px_311px_361px_1fr] items-center pl-6";

function CertificateTable() {
  return (
    <div className="mt-[63px] rounded-lg border-2 border-b-4 border-[#d7d7dc]">
      <div className="flex h-[124px] items-center rounded-t-md bg-[#f4f4f4] pl-12">
        <button className="h-[76px] w-96 rounded-md bg-[#2963d8] text-[27px] font-bold tracking-[0.240px] text-white">Generate new certificate</button>
      </div>
      <div className={`${columns} h-[76px] border-y-2 border-[#d7d7dc] pb-0.5 font-bold tracking-[0.500px]`}>
        <span>Type</span>
        <span>Created</span>
        <span>Expires</span>
        <span>Status</span>
        <span>Actions</span>
      </div>
      {certificates.map((c) => (
        <div key={c.type} className={`${columns} h-[102px] border-b-2 border-[#d7d7dc] pb-0.5 tracking-[0.400px] last:h-[100px] last:border-b-0`}>
          <span className="tracking-[1px]">{c.type}</span>
          <span className="tracking-[-0.100px]">{c.created}</span>
          <span>{c.expires}</span>
          <span className="flex items-center">
            {c.status}
            {c.warn && (
              <svg viewBox="0 0 26 24" className="ml-[9px] h-6 w-[26px]">
                <path d="M13 3l10 18H3z" fill="#f5c34b" stroke="#f5c34b" strokeWidth="5" strokeLinejoin="round" />
                <path d="M13 7v8" stroke="#fff" strokeWidth="2.800" strokeLinecap="round" />
                <circle cx="13" cy="19.500" r="1.600" fill="#fff" />
              </svg>
            )}
          </span>
          <span className="flex items-center pl-[26px] font-bold tracking-[0.550px] text-[#2963d8]">
            Actions
            <svg viewBox="0 0 13 13" className="mt-0.5 ml-4 size-[13px]">
              <path d="M0 0h13L6.500 13z" fill="currentColor" />
            </svg>
          </span>
        </div>
      ))}
    </div>
  );
}

function SamlSetup() {
  return (
    <aside className="ml-12 w-[496px] pt-[254px] leading-[48px]">
      <h4 className="font-bold tracking-[1.200px]">SAML Setup</h4>
      <p className="mt-[18px] tracking-[0.800px] whitespace-nowrap">
        <span className="tracking-[0.700px]">Single Sign On using SAML will not</span>
        <br />
        <span className="tracking-[0.520px]">work until you configure the app to</span>
        <br />
        trust Okta as an IdP.
      </p>
      <button className="mt-5 flex h-[76px] w-[495px] items-center rounded-lg bg-[#2963d8] pl-[27px] text-[27px] font-bold tracking-[0.270px] whitespace-nowrap text-white">
        <svg viewBox="0 0 26 24" className="mr-3 h-6 w-[26px]" fill="none" stroke="#fff" strokeWidth="2.400">
          <path d="M12 3H2.500v18.500h20V13M15 1.500h9.500V10M24 2L12 14" />
        </svg>
        View SAML setup instructions
      </button>
    </aside>
  );
}

function Content() {
  return (
    <main className="flex-1 overflow-hidden pl-[138px]">
      <div className="flex">
        <div className="w-[1440px]">
          <div className="h-[136px] overflow-hidden border-x-2 border-b-2 border-[#c1c1c8]">
            <div className="-mt-[22px] flex pl-12 leading-[48px] text-[#6e6e78]">
              <span className="w-[557px] tracking-[0.440px] text-[#1d1d21]">Password reveal</span>
              <span className="mt-2 mr-6 size-8 rounded-md border-[3px] border-[#d7d7dc] bg-[#f4f4f4]" />
              <span className="tracking-[0.400px]">
                Allow users to securely see their password
                <br />
                (Recommended)
              </span>
            </div>
          </div>
          <h2 className="mt-[49px] text-[47px] leading-[60px] font-bold tracking-[0.560px]">SAML Signing Certificates</h2>
          <CertificateTable />
          <section className="mt-14 h-[272px] rounded-lg border-2 border-[#c1c1c8] px-12">
            <div className="flex items-center justify-between pt-[62px] pr-[26px] leading-[48px] font-bold">
              <h3 className="text-[34px] tracking-[1.080px]">User authentication</h3>
              <a className="tracking-[1.100px] text-[#2963d8]">Edit</a>
            </div>
            <div className="mt-[62px] flex leading-[48px] tracking-[0.680px]">
              <span className="w-[557px]">Authentication policy</span>
              <span className="w-[266px]">Any two factors</span>
              <a className="tracking-[0.340px] text-[#2963d8]">View policy details</a>
            </div>
          </section>
        </div>
        <SamlSetup />
      </div>
      <footer className="mt-24 flex h-[73px] w-[2000px] items-center border-t-2 border-[#c1c1c8] tracking-[0.750px] whitespace-nowrap text-[#6e6e78]">
        <span className="w-[376px]">© 2023 Okta, Inc.</span>
        <span className="w-[237px] tracking-[0.200px]">Privacy</span>
        <span className="w-[444px] tracking-[0.600px]">Version 2022.12.3 E</span>
        <span className="w-[313px]">OK14 US Cell</span>
        <span className="w-[163px] tracking-[0.900px]">Status site</span>
        <span className="w-[336px] tracking-[0.820px]">Download Okta Plugin</span>
        <span className="tracking-[0.400px]">Feedback</span>
      </footer>
    </main>
  );
}

export default function App() {
  return (
    <div className="flex h-[1800px] w-[2880px] flex-col overflow-hidden bg-[#12073a] font-['Inter',sans-serif]">
      <MenuBar />
      <div className="flex flex-1">
        <Dock />
        <div className="relative mt-0.5 flex h-[1750px] w-[2798px] flex-col overflow-hidden rounded-t-[20px] bg-[#93254d]">
          <TabStrip />
          <Toolbar />
          <Bookmarks />
          <div className="flex flex-1 flex-col bg-white text-[26px] text-[#1d1d21]">
            <TrialBanner />
            <PageHeader />
            <div className="flex flex-1">
              <SideNav />
              <Content />
            </div>
          </div>
          <div className="pointer-events-none absolute inset-y-0 left-0 w-[72px] bg-linear-to-r from-black/12 via-black/4 to-transparent" />
          <div className="absolute bottom-0 left-0 flex h-[42px] w-[1610px] items-center rounded-tr-lg bg-[#5b1631] pt-px pl-2.5 text-[23px] font-medium tracking-[0.450px] whitespace-nowrap text-white shadow-[0_0_28px_rgba(0,0,0,0.3)]">
            https://trial-4619730-admin.okta.com/app/trial-4619730_unskriptauth0dev_1/0oa3t0p6813wR5mNH697/setup/help/SAML_2_0/instructions
          </div>
          <div className="pointer-events-none absolute top-[857px] left-[2105px] h-[215px] w-[576px] rounded-[50%] border-[10px] border-[#eb4025]" />
        </div>
      </div>
    </div>
  );
}
